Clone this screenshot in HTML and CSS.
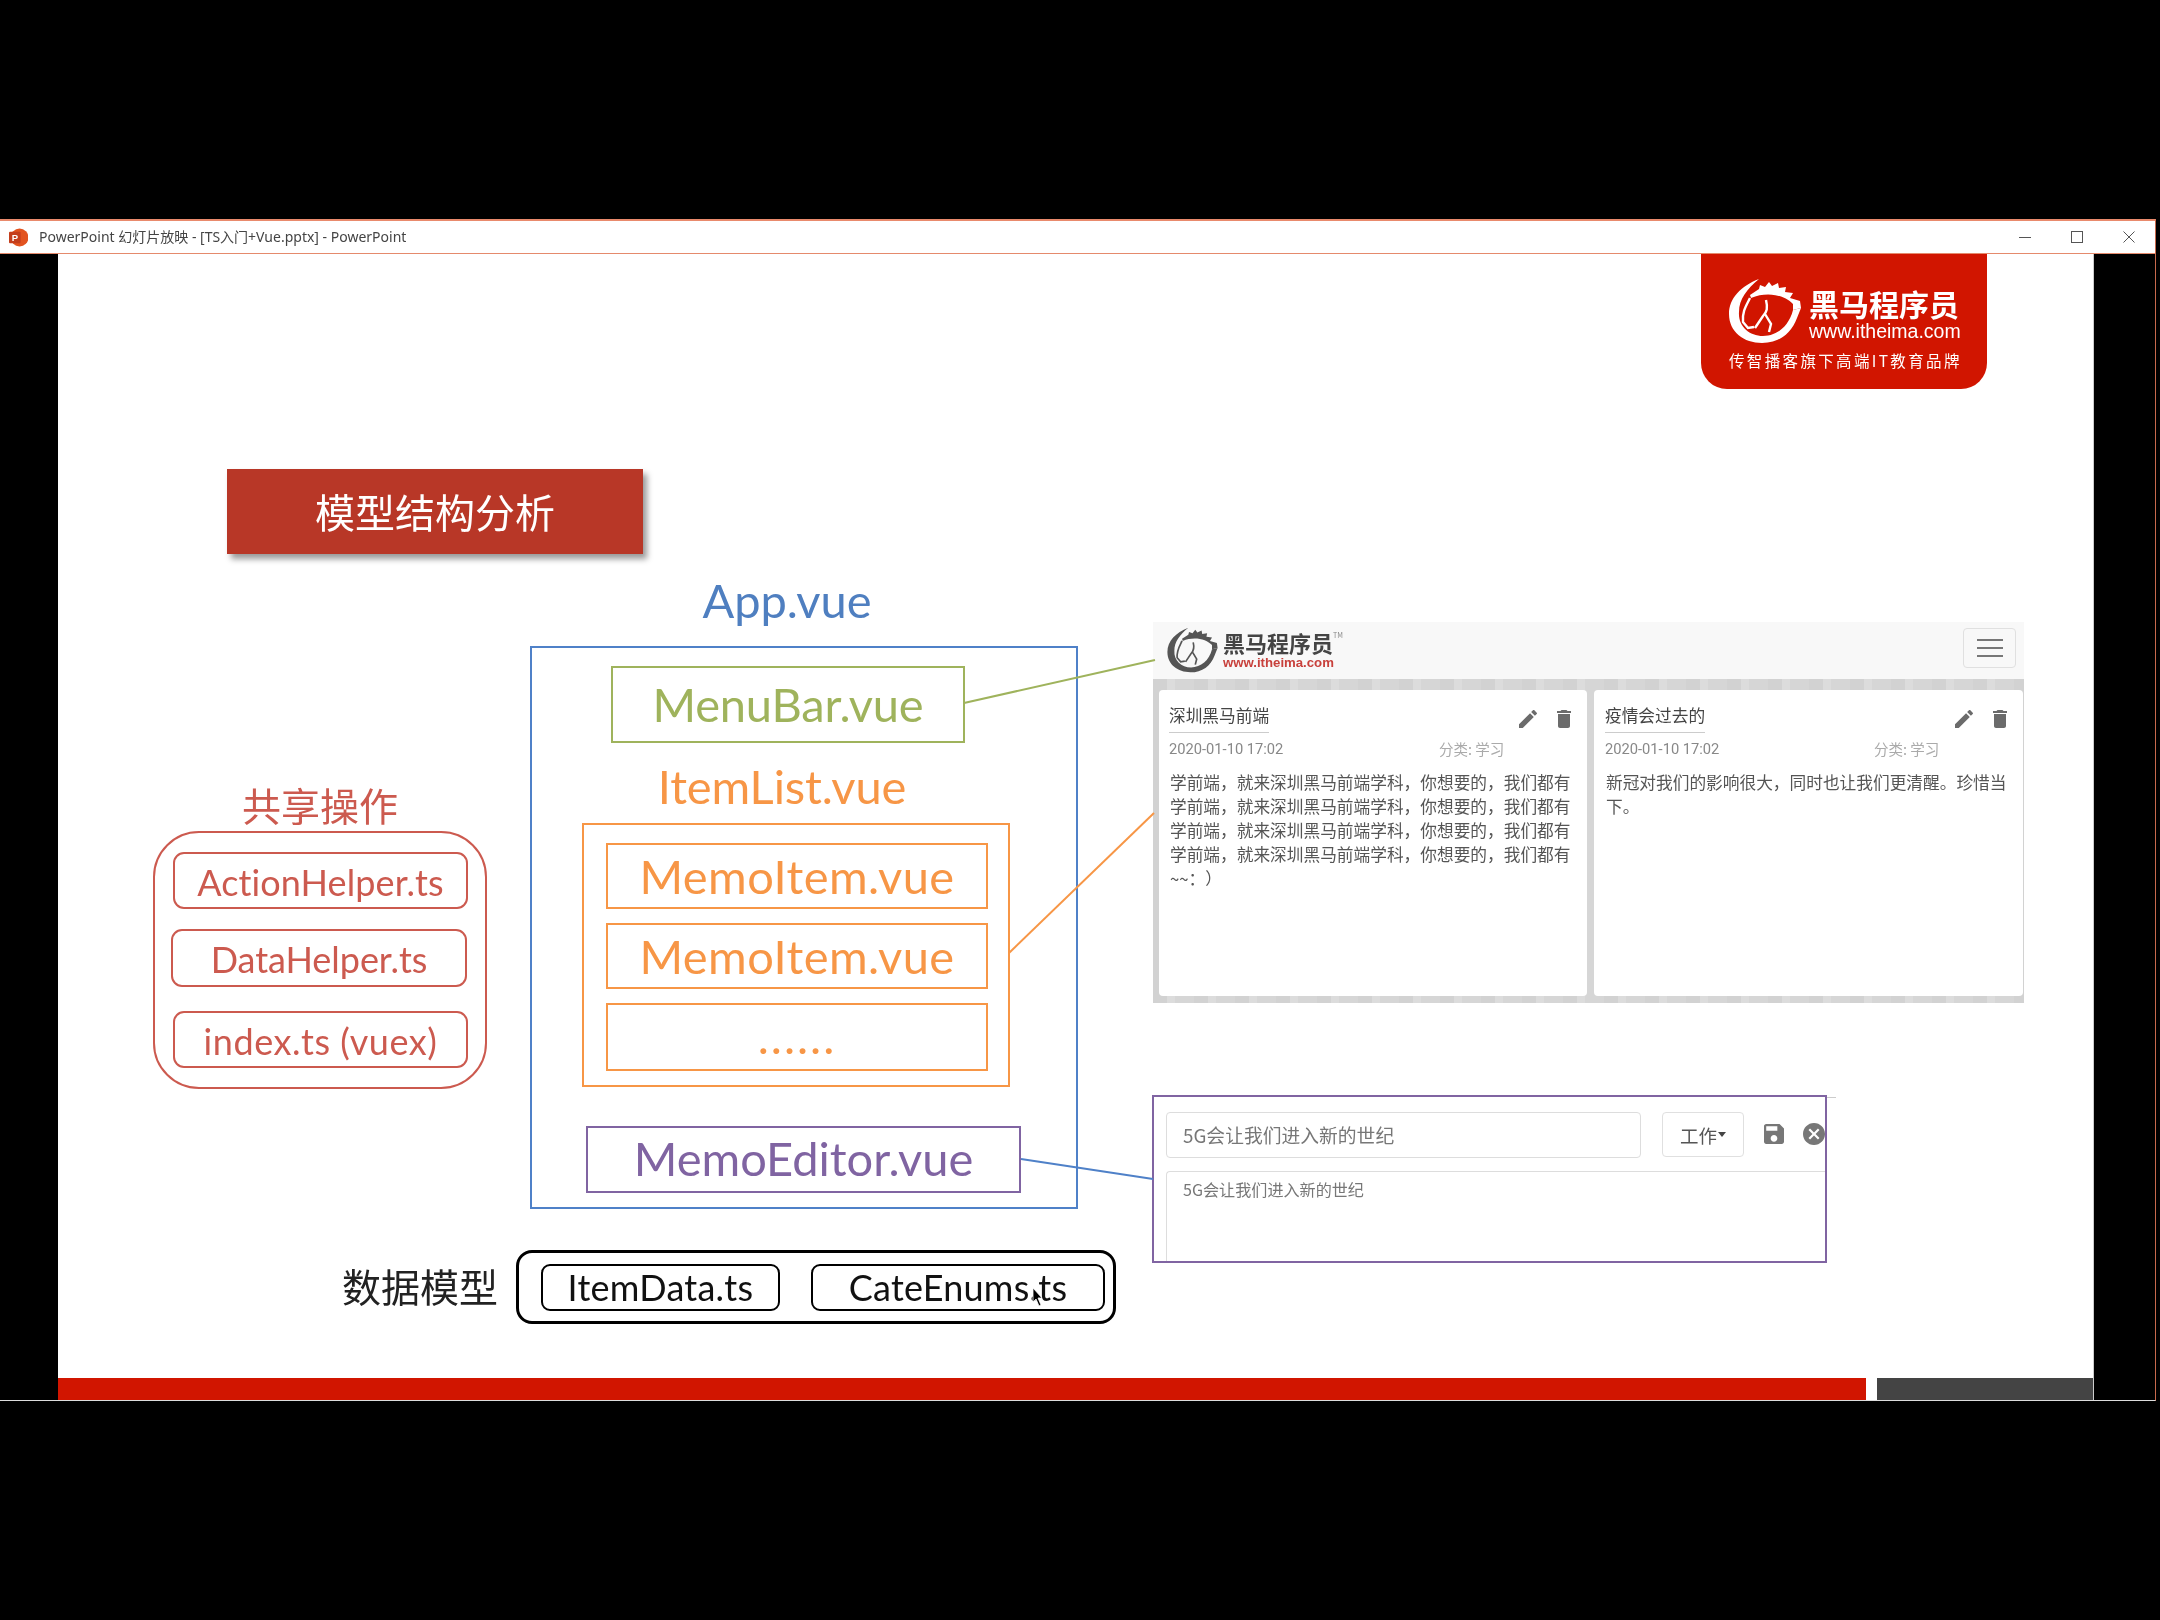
FILE: index.html
```html
<!DOCTYPE html>
<html lang="zh-CN">
<head>
<meta charset="utf-8">
<title>PowerPoint 幻灯片放映</title>
<link rel="stylesheet" href="styles.css">
</head>
<body>
<svg class="defs" aria-hidden="true">
  <symbol id="horse" viewBox="0 0 72 66">
    <path fill="currentColor" d="M30 1C12 8 0 20 0 36c0 18 15 29 33 29 17 0 29-9 35-25l4-10-8 2c-4 16-16 26-30 26C20 58 9 48 10 34c0-13 8-23 20-33z"/>
    <path fill="currentColor" d="M21 17l9-6 1-4 5 2 4-5 3 4 6-3 1 5 7-1-1 5 8 1-3 5 10 3 1 7-8 2v-6c-8-9-26-13-42-6z"/>
    <path fill="none" stroke="currentColor" stroke-width="2.4" d="M21 20c-4 8-8 14-7 24l5 6 6-1M37 22c2 8 1 12-3 16l-8 12M36 36l6 10-2 8"/>
  </symbol>
  <symbol id="i-edit" viewBox="3 3 18 18"><path fill="currentColor" d="M3 17.25V21h3.75L17.81 9.94l-3.75-3.75L3 17.25zM20.71 7.04c.39-.39.39-1.02 0-1.41l-2.34-2.34c-.39-.39-1.02-.39-1.41 0l-1.83 1.83 3.75 3.75 1.83-1.83z"/></symbol>
  <symbol id="i-trash" viewBox="5 3 14 18"><path fill="currentColor" d="M6 19c0 1.1.9 2 2 2h8c1.100 0 2-.9 2-2V7H6v12zM19 4h-3.500l-1-1h-5l-1 1H5v2h14V4z"/></symbol>
</svg>

<div class="window">
  <header class="titlebar">
    <svg class="ppt-icon" viewBox="0 0 18 18"><circle cx="10" cy="9" r="8.500" fill="#e2531f"/><rect x="0" y="3.500" width="11" height="11" rx="1" fill="#c43e1c"/><text x="2.600" y="12.500" class="ppt-letter">P</text></svg>
    <span class="title-text">PowerPoint 幻灯片放映 - [TS入门+Vue.pptx] - PowerPoint</span>
    <div class="win-controls">
      <svg class="win-btn" viewBox="0 0 12 12"><path d="M0 6.500h12" stroke="#555" fill="none"/></svg>
      <svg class="win-btn" viewBox="0 0 12 12"><rect x=".5" y=".5" width="11" height="11" stroke="#555" fill="none"/></svg>
      <svg class="win-btn" viewBox="0 0 12 12"><path d="M.5.500l11 11M11.500.500l-11 11" stroke="#555" fill="none"/></svg>
    </div>
  </header>

  <main class="slide">
    <div class="canvas">
      <div class="badge">
        <div class="badge-top">
          <svg class="badge-horse"><use href="#horse"/></svg>
          <div class="badge-text">
            <div class="badge-name">黑马程序员</div>
            <div class="badge-url">www.itheima.com</div>
          </div>
        </div>
        <div class="badge-tag">传智播客旗下高端IT教育品牌</div>
      </div>

      <div class="banner">模型结构分析</div>

      <section class="shared">
        <div class="shared-label">共享操作</div>
        <div class="shared-box">
          <div class="shared-item shared-action">ActionHelper.ts</div>
          <div class="shared-item shared-data">DataHelper.ts</div>
          <div class="shared-item shared-index">index.ts (vuex)</div>
        </div>
      </section>

      <section class="app">
        <div class="app-label">App.vue</div>
        <div class="app-box">
          <div class="menubar">MenuBar.vue</div>
          <div class="list-label">ItemList.vue</div>
          <div class="list-box">
            <div class="memo">MemoItem.vue</div>
            <div class="memo">MemoItem.vue</div>
            <div class="memo memo-dots">......</div>
          </div>
          <div class="memo-editor">MemoEditor.vue</div>
        </div>
      </section>

      <section class="models">
        <div class="models-label">数据模型</div>
        <div class="models-box">
          <div class="model model-item">ItemData.ts</div>
          <div class="model model-cate">CateEnums.ts</div>
        </div>
      </section>

      <section class="shot">
        <div class="shot-head">
          <svg class="shot-horse"><use href="#horse"/></svg>
          <div class="brand">
            <div class="brand-name">黑马程序员<sup class="brand-tm">TM</sup></div>
            <div class="brand-url">www.itheima.com</div>
          </div>
          <div class="menu-btn"><span class="menu-line"></span><span class="menu-line"></span><span class="menu-line"></span></div>
        </div>
        <div class="shot-body">
          <article class="card">
            <div class="card-head">
              <h3 class="card-title">深圳黑马前端</h3>
              <div class="card-icons">
                <svg class="ic-edit"><use href="#i-edit"/></svg>
                <svg class="ic-trash"><use href="#i-trash"/></svg>
              </div>
            </div>
            <div class="card-meta"><span class="card-date">2020-01-10 17:02</span><span class="card-cate">分类: 学习</span></div>
            <p class="card-text">学前端，就来深圳黑马前端学科，你想要的，我们都有学前端，就来深圳黑马前端学科，你想要的，我们都有学前端，就来深圳黑马前端学科，你想要的，我们都有学前端，就来深圳黑马前端学科，你想要的，我们都有~~：）</p>
          </article>
          <article class="card">
            <div class="card-head">
              <h3 class="card-title">疫情会过去的</h3>
              <div class="card-icons">
                <svg class="ic-edit"><use href="#i-edit"/></svg>
                <svg class="ic-trash"><use href="#i-trash"/></svg>
              </div>
            </div>
            <div class="card-meta"><span class="card-date">2020-01-10 17:02</span><span class="card-cate">分类: 学习</span></div>
            <p class="card-text">新冠对我们的影响很大，同时也让我们更清醒。珍惜当下。</p>
          </article>
        </div>
      </section>

      <section class="editor">
        <div class="editor-row">
          <div class="editor-input">5G会让我们进入新的世纪</div>
          <div class="editor-btn">工作<span class="caret"></span></div>
          <svg class="ic-save" viewBox="3 3 18 18"><path fill="currentColor" d="M17 3H5c-1.110 0-2 .9-2 2v14c0 1.100.89 2 2 2h14c1.100 0 2-.9 2-2V7l-4-4zm-5 16c-1.660 0-3-1.340-3-3s1.340-3 3-3 3 1.340 3 3-1.340 3-3 3zm3-10H5V5h10v4z"/></svg>
          <svg class="ic-close" viewBox="2 2 20 20"><path fill="currentColor" d="M12 2C6.470 2 2 6.470 2 12s4.470 10 10 10 10-4.470 10-10S17.530 2 12 2zm5 13.590L15.590 17 12 13.410 8.410 17 7 15.590 10.590 12 7 8.410 8.410 7 12 10.590 15.590 7 17 8.410 13.410 12 17 15.590z"/></svg>
        </div>
        <div class="editor-area">5G会让我们进入新的世纪</div>
      </section>
      <div class="editor-stray"></div>

      <svg class="links" viewBox="0 0 2036 1124">
        <line class="link-green" x1="906" y1="449" x2="1097" y2="406"/>
        <line class="link-orange" x1="951" y1="699" x2="1096" y2="559"/>
        <line class="link-blue" x1="963" y1="905" x2="1095" y2="925"/>
      </svg>

      <svg class="cursor" viewBox="0 0 10 18"><path d="M1 0v14l3-3 3 7 2-1-3-7h4z" fill="#000" stroke="#fff" stroke-width=".8"/></svg>
    </div>
    <footer class="slide-foot"><div class="foot-red"></div><div class="foot-gray"></div></footer>
  </main>
</div>
</body>
</html>
```

FILE: styles.css
```css
* { box-sizing: border-box; }
html, body { margin: 0; padding: 0; background: #000; }
body {
  width: 2160px;
  height: 1620px;
  padding-top: 219px;
  overflow: hidden;
  font-family: "Lato", "Noto Sans CJK SC", sans-serif;
}
.defs { position: absolute; width: 0; height: 0; }

/* window */
.window {
  width: 2156px;
  height: 1182px;
  display: flex;
  flex-direction: column;
  background: #000;
  border-top: 2px solid #e98a6c;
  border-right: 1px solid #c8694c;
  border-bottom: 1px solid #ddd;
  filter: blur(.4px);
}
.titlebar {
  height: 33px;
  flex: none;
  display: flex;
  align-items: center;
  background: #fff;
  border-bottom: 1px solid #e58a6c;
  padding-left: 9px;
}
.ppt-icon { width: 19px; height: 19px; flex: none; }
.ppt-letter { font: bold 9px "Liberation Sans", sans-serif; fill: #fff; }
.title-text {
  margin: 0 0 1px 11px;
  font: 14px/1 "Noto Sans", "Noto Sans CJK SC", sans-serif;
  color: #444;
}
.win-controls {
  margin-left: auto;
  display: flex;
  align-items: center;
  gap: 40px;
  padding-right: 20px;
}
.win-btn { width: 12px; height: 12px; display: block; }

/* slide */
.slide {
  flex: 1;
  margin-left: 58px;
  width: 2036px;
  display: flex;
  flex-direction: column;
  background: #fff;
  border-right: 1px solid #ccc;
}
.canvas { position: relative; flex: 1; }
.slide-foot { height: 22px; flex: none; display: flex; gap: 11px; }
.foot-red { width: 1808px; background: #d11500; }
.foot-gray { flex: 1; background: #444; }

/* brand badge */
.badge {
  position: absolute;
  left: 1643px;
  top: 0;
  width: 286px;
  height: 135px;
  padding: 24px 0 0 28px;
  background: #d11500;
  border-radius: 0 0 26px 26px;
  color: #fff;
}
.badge-top { display: flex; gap: 8px; }
.badge-horse { width: 72px; height: 66px; flex: none; color: #fff; }
.badge-text { padding-top: 7px; }
.badge-name { font: bold 30px/36px "Noto Sans CJK SC", sans-serif; }
.badge-url { font: 19.5px/20px "Liberation Sans", sans-serif; white-space: nowrap; }
.badge-tag {
  margin-top: 6px;
  font: 15.5px/20px "Noto Sans CJK SC", sans-serif;
  letter-spacing: 2.35px;
  white-space: nowrap;
}

/* banner */
.banner {
  position: absolute;
  left: 169px;
  top: 215px;
  width: 416px;
  height: 85px;
  padding-bottom: 2px;
  display: flex;
  align-items: center;
  justify-content: center;
  background: #b83727;
  box-shadow: 4px 5px 6px rgba(0, 0, 0, .4);
  color: #fff;
  font: 40px "Noto Sans CJK SC", sans-serif;
}

/* shared ops */
.shared {
  position: absolute;
  left: 95px;
  top: 525px;
  width: 334px;
  color: #cc5a4f;
}
.shared-label {
  height: 52px;
  text-align: center;
  font: 39px/50px "Noto Sans CJK SC", sans-serif;
}
.shared-box {
  height: 258px;
  padding: 19px 18px 0;
  border: 2px solid #cc5a4f;
  border-radius: 46px;
}
.shared-item {
  display: flex;
  align-items: center;
  justify-content: center;
  width: 295px;
  height: 57px;
  padding-top: 2px;
  border: 2px solid #cc5a4f;
  border-radius: 11px;
  font-size: 36px;
  letter-spacing: .1px;
  white-space: nowrap;
}
.shared-data { margin: 20px 0 0 -2px; width: 296px; height: 58px; letter-spacing: -.05px; }
.shared-index { margin-top: 24px; letter-spacing: .55px; }

/* app diagram */
.app {
  position: absolute;
  left: 472px;
  top: 317px;
  width: 548px;
}
.app-label {
  height: 60px;
  margin-bottom: 15px;
  padding-right: 34px;
  text-align: center;
  color: #4f7fc0;
  font-size: 47px;
  line-height: 58px;
}
.app-box {
  height: 563px;
  border: 2px solid #4f81c8;
  padding-top: 18px;
}
.menubar {
  margin-left: 79px;
  width: 354px;
  height: 77px;
  padding-bottom: 1px;
  display: flex;
  align-items: center;
  justify-content: center;
  border: 2px solid #9fb35c;
  color: #9fb35c;
  font-size: 47px;
  letter-spacing: -.2px;
}
.list-label {
  width: 500px;
  height: 80px;
  padding-top: 7px;
  text-align: center;
  color: #f79646;
  font-size: 47px;
  line-height: 72px;
  letter-spacing: -.1px;
}
.list-box {
  margin-left: 50px;
  width: 428px;
  height: 264px;
  padding: 18px 20px 0 22px;
  border: 2px solid #f79646;
}
.memo {
  height: 66px;
  margin-bottom: 14px;
  display: flex;
  align-items: center;
  justify-content: center;
  border: 2px solid #f79646;
  color: #f79646;
  font-size: 47px;
  letter-spacing: .45px;
}
.memo-dots { height: 68px; margin-bottom: 0; letter-spacing: 2px; padding-bottom: 2px; }
.memo-editor {
  margin: 39px 0 0 54px;
  width: 435px;
  height: 67px;
  padding-bottom: 3px;
  display: flex;
  align-items: center;
  justify-content: center;
  border: 2px solid #8064a2;
  color: #8064a2;
  font-size: 47px;
}

/* data models */
.models {
  position: absolute;
  left: 284px;
  top: 996px;
  display: flex;
  align-items: center;
  gap: 14px;
}
.models-label {
  width: 160px;
  margin-bottom: 5px;
  font: 39px/50px "Noto Sans CJK SC", sans-serif;
  color: #222;
  white-space: nowrap;
}
.models-box {
  width: 600px;
  height: 74px;
  display: flex;
  align-items: center;
  gap: 31px;
  padding-left: 22px;
  border: 3px solid #000;
  border-radius: 16px;
}
.model {
  height: 47px;
  display: flex;
  align-items: center;
  justify-content: center;
  border: 2.500px solid #000;
  border-radius: 9px;
  color: #111;
  font-size: 36px;
  letter-spacing: .25px;
}
.model-item { width: 239px; }
.model-cate { width: 294px; }

/* screenshot: list */
.shot {
  position: absolute;
  left: 1095px;
  top: 368px;
  width: 871px;
  height: 381px;
  display: flex;
  flex-direction: column;
}
.shot-head {
  height: 57px;
  flex: none;
  display: flex;
  align-items: center;
  padding: 0 8px 0 14px;
  background: #f8f8f8;
}
.shot-horse { width: 51px; height: 46px; flex: none; color: #555; margin-bottom: 2px; }
.brand { margin-left: 5px; margin-bottom: 2px; }
.brand-name { font: bold 22px/26px "Noto Sans CJK SC", sans-serif; color: #444; position: relative; }
.brand-tm { font-size: 7px; font-weight: normal; color: #888; vertical-align: top; line-height: 12px; }
.brand-url { font: bold 13.2px/16px "Liberation Sans", sans-serif; color: #c8413c; }
.menu-btn {
  margin: 0 0 6px auto;
  width: 53px;
  height: 40px;
  display: flex;
  flex-direction: column;
  align-items: center;
  justify-content: center;
  gap: 6px;
  border: 1px solid #e0e0e0;
  border-radius: 4px;
}
.menu-line { width: 26px; height: 2px; background: #777; }
.shot-body {
  flex: 1;
  display: grid;
  grid-template-columns: 428px 429px;
  gap: 7px;
  padding: 11px 1px 7px 6px;
  background: repeating-linear-gradient(90deg, #d2d2d2 0 14px, #dcdcdc 14px 22px, #d6d6d6 22px 41px);
}
.card {
  padding: 14px 16px 0 10px;
  background: #fff;
  border-radius: 4px;
  color: #555;
}
.card + .card { padding-left: 11px; }
.card-head { display: flex; justify-content: space-between; align-items: flex-start; }
.card-title {
  margin: 0;
  height: 29px;
  border-bottom: 1px solid #ccc;
  font: 16.7px/22px "Noto Sans CJK SC", sans-serif;
  color: #444;
}
.card-icons { display: flex; gap: 20px; margin-top: 6px; color: #6b6b6b; }
.ic-edit { width: 18px; height: 18px; display: block; }
.ic-trash { width: 14px; height: 18px; display: block; }
.card-meta { display: flex; margin-top: 4px; line-height: 24px; }
.card-date { width: 270px; font: 14.7px/24px "Roboto", sans-serif; color: #888; }
.card-cate { font: 14.5px/24px "Noto Sans CJK SC", sans-serif; color: #aaa; }
.card + .card .card-date { width: 269px; }
.card-text {
  margin: 9px 0 0;
  width: 404px;
  padding-left: 1px;
  font: 16.7px/24px "Noto Sans CJK SC", sans-serif;
  color: #555;
  text-spacing-trim: space-all;
}

/* screenshot: editor */
.editor {
  position: absolute;
  left: 1094px;
  top: 841px;
  width: 675px;
  height: 168px;
  border: 2.500px solid #8064a2;
  overflow: hidden;
  background: #fff;
}
.editor-row { display: flex; align-items: flex-start; padding: 15px 0 0 12px; }
.editor-input {
  width: 475px;
  height: 46px;
  flex: none;
  padding-left: 16px;
  border: 1px solid #ddd;
  border-radius: 4px;
  font: 18.8px/44px "Noto Sans CJK SC", sans-serif;
  color: #777;
}
.editor-btn {
  margin-left: 21px;
  width: 82px;
  height: 45px;
  flex: none;
  display: flex;
  align-items: center;
  justify-content: center;
  border: 1px solid #e0e0e0;
  border-radius: 4px;
  font: 18.5px "Noto Sans CJK SC", sans-serif;
  color: #555;
}
.caret {
  margin-left: 1px;
  border-top: 5px solid #444;
  border-left: 4.500px solid transparent;
  border-right: 4.500px solid transparent;
}
.ic-save { margin: 12px 0 0 19px; width: 22px; height: 20px; flex: none; color: #777; }
.ic-close { margin: 11px 0 0 18px; width: 22px; height: 22px; flex: none; color: #777; }
.editor-area {
  margin: 13px 0 0 12px;
  height: 90px;
  padding: 7px 0 0 16px;
  border: 1px solid #ddd;
  border-right: 0;
  border-bottom: 0;
  border-radius: 4px 0 0 0;
  font: 16.1px/20px "Noto Sans CJK SC", sans-serif;
  color: #777;
}
.editor-stray {
  position: absolute;
  left: 1769px;
  top: 843px;
  width: 9px;
  height: 1px;
  background: #ccc;
}

/* connectors */
.links { position: absolute; left: 0; top: 0; width: 2036px; height: 1124px; pointer-events: none; }
.links line { stroke-width: 2; }
.link-green { stroke: #9fb35c; }
.link-orange { stroke: #f79646; }
.link-blue { stroke: #4f81c8; }

.cursor { position: absolute; left: 974px; top: 1034px; width: 10px; height: 18px; }
```
